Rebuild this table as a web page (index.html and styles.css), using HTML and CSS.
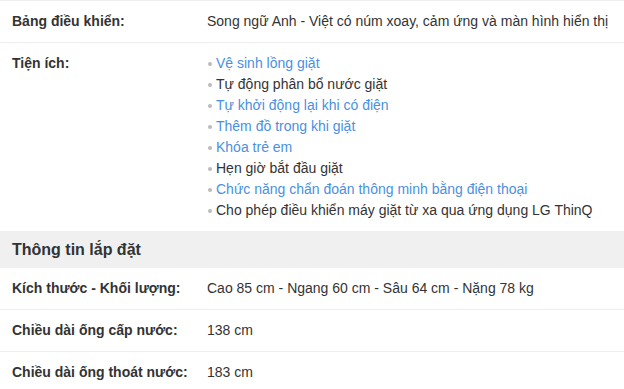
FILE: index.html
```html
<!DOCTYPE html>
<html lang="vi">
<head>
<meta charset="utf-8">
<link rel="stylesheet" href="styles.css">
</head>
<body>
<div class="specs">
  <div class="row first">
    <div class="label">Bảng điều khiển:</div>
    <div class="value">Song ngữ Anh - Việt có núm xoay, cảm ứng và màn hình hiển thị</div>
  </div>
  <div class="row noborder">
    <div class="label">Tiện ích:</div>
    <ul class="value list">
      <li><a href="#" class="link">Vệ sinh lồng giặt</a></li>
      <li>Tự động phân bổ nước giặt</li>
      <li><a href="#" class="link">Tự khởi động lại khi có điện</a></li>
      <li><a href="#" class="link">Thêm đồ trong khi giặt</a></li>
      <li><a href="#" class="link">Khóa trẻ em</a></li>
      <li>Hẹn giờ bắt đầu giặt</li>
      <li><a href="#" class="link">Chức năng chẩn đoán thông minh bằng điện thoại</a></li>
      <li>Cho phép điều khiển máy giặt từ xa qua ứng dụng LG ThinQ</li>
    </ul>
  </div>
  <div class="section">Thông tin lắp đặt</div>
  <div class="row">
    <div class="label">Kích thước - Khối lượng:</div>
    <div class="value">Cao 85 cm - Ngang 60 cm - Sâu 64 cm - Nặng 78 kg</div>
  </div>
  <div class="row">
    <div class="label">Chiều dài ống cấp nước:</div>
    <div class="value">138 cm</div>
  </div>
  <div class="row">
    <div class="label">Chiều dài ống thoát nước:</div>
    <div class="value">183 cm</div>
  </div>
</div>
</body>
</html>
```
FILE: styles.css
```css
html, body {
  margin: 0;
  padding: 0;
  background: #fff;
}
body {
  font-family: "Liberation Sans", Arial, sans-serif;
  font-size: 14px;
  line-height: 21px;
  color: #333;
}
.specs {
  width: 624px;
}
.row {
  display: grid;
  grid-template-columns: 195px 1fr;
  padding: 10px 0 10px 12px;
  border-bottom: 1px solid #eee;
}
.row.first {
  border-top: 1px solid #eee;
}
.row.noborder {
  border-bottom: none;
}
.label {
  font-weight: bold;
  color: #333;
}
.value {
  color: #333;
}
.list {
  list-style: none;
  margin: 0;
  padding: 0;
}
.list li {
  display: flex;
  align-items: center;
}
.list li::before {
  content: "";
  display: inline-block;
  width: 4px;
  height: 4px;
  border-radius: 50%;
  background: #bbb;
  margin: 1px 4px 0 1px;
}
.link {
  color: #4a90e2;
  text-decoration: none;
}
.section {
  background: #f0f0f0;
  font-weight: bold;
  font-size: 16px;
  line-height: 37px;
  height: 37px;
  padding-left: 12px;
  color: #333;
}
```
